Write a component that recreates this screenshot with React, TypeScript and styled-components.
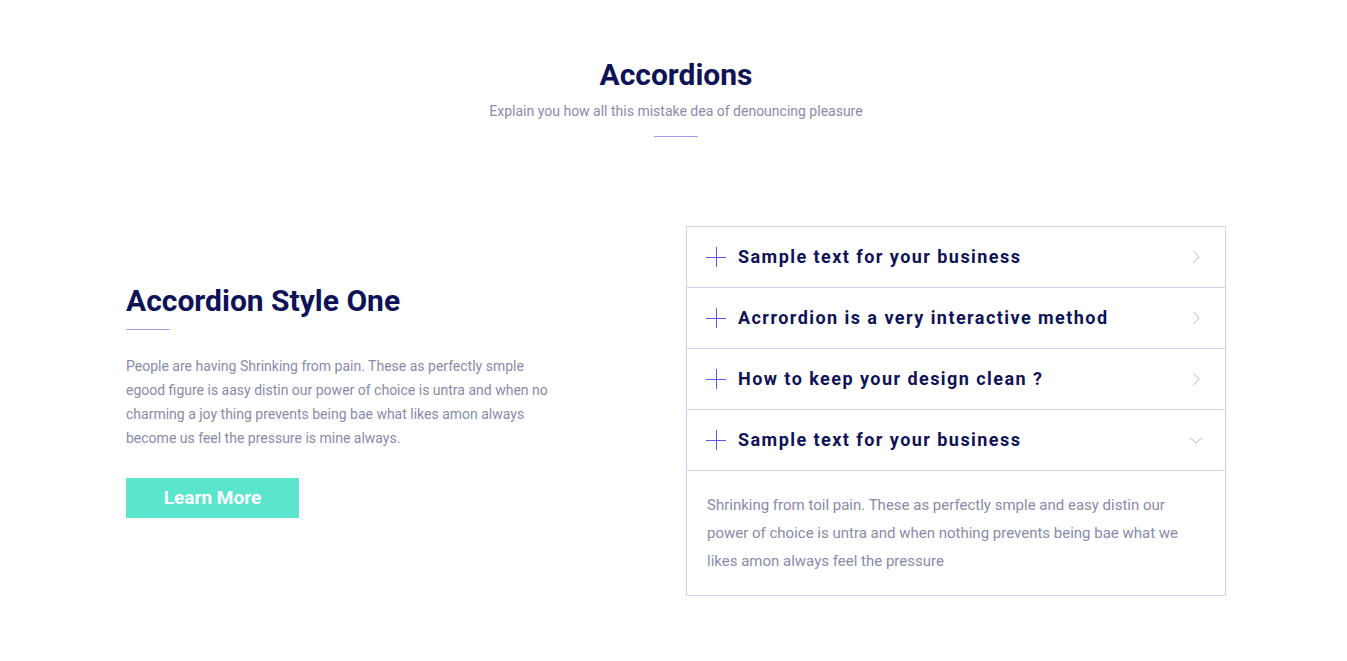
import React, { useState } from 'react';
import styled, { createGlobalStyle } from 'styled-components';

const GlobalStyle = createGlobalStyle`
  body {
    margin: 0;
    background: #fff;
    font-family: Roboto, 'Liberation Sans', sans-serif;
  }
`;

const Page = styled.div`
  padding: 57px 0 60px 5px;
`;

const SectionHead = styled.div`
  display: flex;
  flex-direction: column;
  align-items: center;
  h2 {
    margin: 0;
    font-size: 30px;
    line-height: 1.2;
    font-weight: 700;
    color: #0e1257;
  }
  p {
    margin: 8px 0 14px;
    font-size: 14px;
    line-height: 21px;
    color: #8b8aa9;
  }
`;

const Rule = styled.div<{ $align?: 'center' | 'left' }>`
  width: 44px;
  height: 1px;
  background: #a49cf0;
  align-self: ${p => (p.$align === 'left' ? 'flex-start' : 'center')};
`;

const Container = styled.div`
  width: 1100px;
  margin: 89px auto 0;
  display: grid;
  grid-template-columns: 560px 540px;
`;

const Intro = styled.div`
  padding-top: 57px;
  display: flex;
  flex-direction: column;
  h3 {
    margin: 0 0 10px;
    font-size: 30px;
    line-height: 1.2;
    font-weight: 700;
    color: #0e1257;
  }
  p {
    margin: 24px 0 28px;
    max-width: 440px;
    font-size: 14px;
    line-height: 24px;
    color: #8b8aa9;
  }
`;

const Button = styled.button`
  width: 173px;
  height: 40px;
  padding: 0 0 2px;
  border: none;
  background: #5ce5cd;
  color: #fff;
  font-family: inherit;
  font-size: 19px;
  font-weight: 700;
  cursor: pointer;
`;

const Accordion = styled.div`
  border: 1px solid #d4d0f3;
`;

const Item = styled.div`
  & + & {
    border-top: 1px solid #d4d0f3;
  }
`;

const Head = styled.div`
  height: 60px;
  padding: 0 22px 0 19px;
  display: flex;
  align-items: center;
  gap: 12px;
  cursor: pointer;
  span {
    flex: 1;
    margin-top: -2px;
    font-size: 18px;
    font-weight: 700;
    letter-spacing: 1.45px;
    color: #0e1257;
  }
`;

const Panel = styled.div`
  border-top: 1px solid #d4d0f3;
  padding: 20px 40px 20px 20px;
  font-size: 15px;
  line-height: 28px;
  color: #8b8aa9;
`;

const Plus = () => (
  <svg width="20" height="20" viewBox="0 0 20 20">
    <path d="M0 10.5h20M10.5 0v20" stroke="#5a5ae6" strokeWidth="1" fill="none" />
  </svg>
);

const Chevron = ({ open }: { open: boolean }) => (
  <svg width="14" height="14" viewBox="0 0 14 14">
    <path
      d={open ? 'M1 4.5l6 5.5 6-5.5' : 'M4.5 1l5.5 6-5.5 6'}
      stroke="#b9b8d3"
      strokeWidth="1"
      fill="none"
    />
  </svg>
);

const items = [
  'Sample text for your business',
  'Acrrordion is a very interactive method',
  'How to keep your design clean ?',
  'Sample text for your business',
];

export default function App() {
  const [open, setOpen] = useState(3);
  return (
    <Page>
      <GlobalStyle />
      <SectionHead>
        <h2>Accordions</h2>
        <p>Explain you how all this mistake dea of denouncing pleasure</p>
        <Rule />
      </SectionHead>
      <Container>
        <Intro>
          <h3>Accordion Style One</h3>
          <Rule $align="left" />
          <p>
            People are having Shrinking from pain. These as perfectly smple egood figure is aasy
            distin our power of choice is untra and when no charming a joy thing prevents being bae
            what likes amon always become us feel the pressure is mine always.
          </p>
          <Button>Learn More</Button>
        </Intro>
        <Accordion>
          {items.map((title, i) => (
            <Item key={i}>
              <Head onClick={() => setOpen(open === i ? -1 : i)}>
                <Plus />
                <span>{title}</span>
                <Chevron open={open === i} />
              </Head>
              {open === i && (
                <Panel>
                  Shrinking from toil pain. These as perfectly smple and easy distin our power of
                  choice is untra and when nothing prevents being bae what we likes amon always feel
                  the pressure
                </Panel>
              )}
            </Item>
          ))}
        </Accordion>
      </Container>
    </Page>
  );
}
